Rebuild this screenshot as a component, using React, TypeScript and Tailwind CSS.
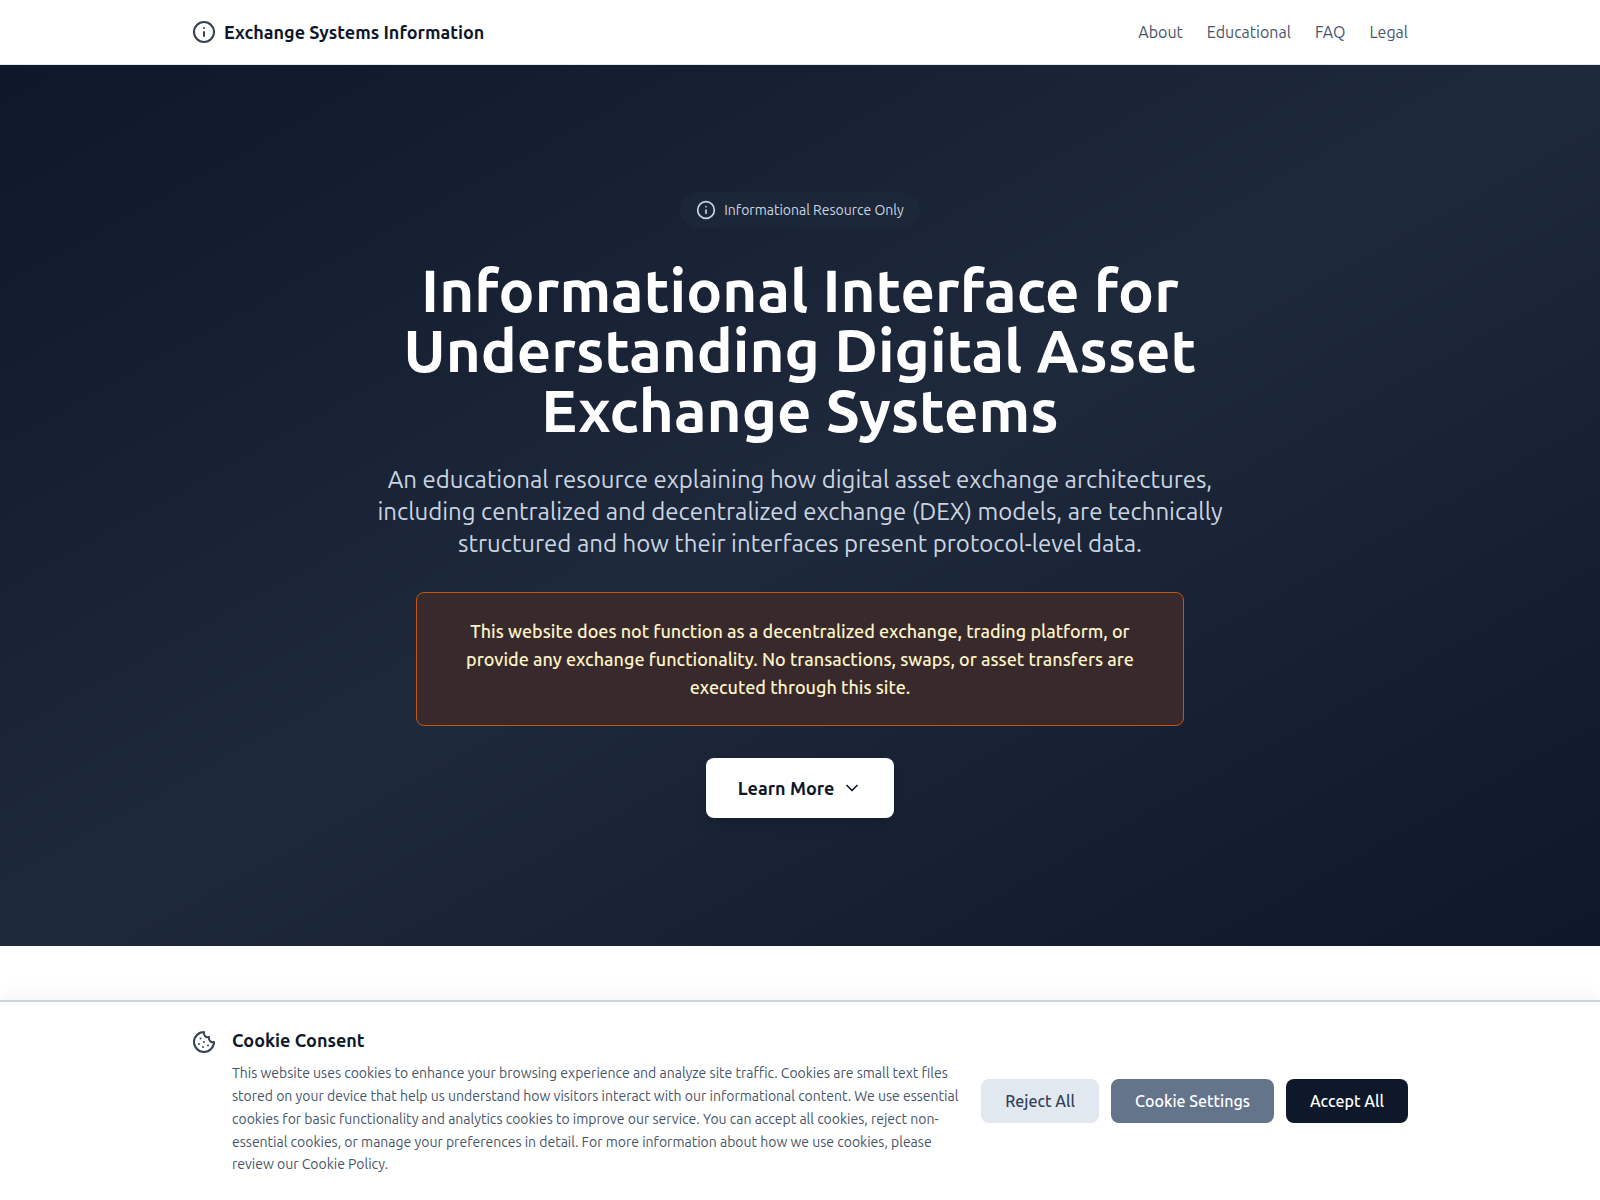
import { ChevronDown, Cookie, Info } from "lucide-react";

const navLinks = ["About", "Educational", "FAQ", "Legal"];

export default function App() {
  return (
    <div className="relative h-[1200px] overflow-hidden bg-white font-['Ubuntu','Noto_Sans',sans-serif]">
      <header className="h-[65px] border-b border-[#e2e8f0] bg-white">
        <div className="mx-auto flex h-full max-w-[1280px] items-center justify-between px-8">
          <div className="flex items-center gap-2">
            <Info size={24} className="text-[#334155]" strokeWidth={2} />
            <span className="text-lg font-semibold text-[#0f172a]">Exchange Systems Information</span>
          </div>
          <nav className="flex gap-6">
            {navLinks.map((link) => (
              <a key={link} className="text-base text-[#475569]">{link}</a>
            ))}
          </nav>
        </div>
      </header>

      <section className="flex h-[881px] flex-col items-center bg-gradient-to-br from-[#0f172a] via-[#1e293b] to-[#0f172a] pt-[127px]">
        <div className="flex items-center gap-2 rounded-full bg-[#1e293b]/50 px-4 py-2 text-sm text-[#cbd5e1]">
          <Info size={20} />
          <span>Informational Resource Only</span>
        </div>
        <h1 className="mt-8 max-w-[896px] text-center text-[60px] leading-[60px] font-bold text-white">
          Informational Interface for Understanding Digital Asset Exchange Systems
        </h1>
        <p className="mt-6 max-w-[896px] text-center text-2xl leading-8 text-[#cbd5e1]">
          An educational resource explaining how digital asset exchange architectures, including centralized and decentralized exchange (DEX) models, are technically structured and how their interfaces present protocol-level data.
        </p>
        <div className="mt-8 w-[768px] rounded-lg border border-[#c2570c] bg-[#382a2c] px-8 py-6 text-center text-lg leading-7 font-medium text-[#fef3c7]">
          This website does not function as a decentralized exchange, trading platform, or provide any exchange functionality. No transactions, swaps, or asset transfers are executed through this site.
        </div>
        <button className="mt-8 flex h-[60px] items-center gap-2 rounded-lg bg-white px-8 text-lg font-semibold text-[#0f172a] shadow-lg">
          Learn More
          <ChevronDown size={20} />
        </button>
      </section>

      <div className="absolute inset-x-0 bottom-0 border-t-2 border-[#cbd5e1] bg-white shadow-[0_-4px_20px_rgba(0,0,0,0.05)]">
        <div className="mx-auto flex max-w-[1280px] items-center gap-5 px-8 py-6">
          <div className="flex flex-1 gap-4">
            <Cookie size={24} className="mt-1 shrink-0 text-[#334155]" />
            <div>
              <h3 className="text-lg font-semibold text-[#0f172a]">Cookie Consent</h3>
              <p className="mt-2 text-sm leading-[22.75px] text-[#475569]">
                This website uses cookies to enhance your browsing experience and analyze site traffic. Cookies are small text files stored on your device that help us understand how visitors interact with our informational content. We use essential cookies for basic functionality and analytics cookies to improve our service. You can accept all cookies, reject non-essential cookies, or manage your preferences in detail. For more information about how we use cookies, please review our Cookie Policy.
              </p>
            </div>
          </div>
          <div className="flex shrink-0 gap-3">
            <button className="rounded-lg bg-[#e2e8f0] px-6 py-2.5 text-base font-medium text-[#334155]">Reject All</button>
            <button className="rounded-lg bg-[#64748b] px-6 py-2.5 text-base font-medium text-white">Cookie Settings</button>
            <button className="rounded-lg bg-[#0f172a] px-6 py-2.5 text-base font-medium text-white">Accept All</button>
          </div>
        </div>
      </div>
    </div>
  );
}
